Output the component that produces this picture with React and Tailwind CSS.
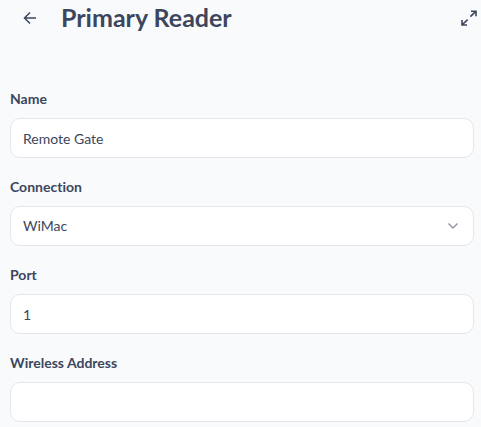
import { useState } from "react";

function Field({ id, label, children }) {
	return (
		<div className="flex flex-col gap-[7px]">
			<label
				htmlFor={id}
				className="text-sm leading-[25px] font-bold text-[#3c465c]"
			>
				{label}
			</label>
			{children}
		</div>
	);
}

function TextField({ id, label, defaultValue }) {
	const [value, setValue] = useState(defaultValue);

	return (
		<Field id={id} label={label}>
			<input
				id={id}
				type="text"
				value={value}
				onChange={(e) => setValue(e.target.value)}
				className="h-10 w-full rounded-[10px] border border-[#e3e6ea] bg-white px-3 text-sm text-[#3c465c] outline-none focus:border-indigo-400"
			/>
		</Field>
	);
}

function App() {
	const [connection, setConnection] = useState("WiMac");

	return (
		<main className="min-h-screen bg-[#f9fafc] pb-1 font-['Lato',sans-serif] text-[#3c465c] [font-variant-ligatures:none]">
			{/*header*/}
			<header className="flex h-9 items-center pr-1 pl-5">
				<button type="button" aria-label="Back" className="p-0.5">
					<svg
						className="size-4"
						viewBox="0 0 16 16"
						fill="none"
						stroke="currentColor"
						strokeWidth="1.5"
					>
						<path d="M14 8H2.5M8 2.5 2.5 8 8 13.5" />
					</svg>
				</button>
				<h1 className="ml-[21px] flex-1 text-[25px] font-bold">
					Primary Reader
				</h1>
				<button type="button" aria-label="Expand">
					<svg
						className="size-4"
						viewBox="0 0 16 16"
						fill="none"
						stroke="currentColor"
						strokeWidth="1.6"
					>
						<path d="M10 1.2h5v5M15 1.2 9.4 6.6M6 15H1v-5M1 15l5.6-5.4" />
					</svg>
				</button>
			</header>
			{/*form*/}
			<form className="mt-[50px] flex flex-col gap-4 pr-[7px] pl-[10px]">
				<TextField id="name" label="Name" defaultValue="Remote Gate" />
				<Field id="connection" label="Connection">
					<div className="relative">
						<select
							id="connection"
							value={connection}
							onChange={(e) => setConnection(e.target.value)}
							className="h-10 w-full appearance-none rounded-[10px] border border-[#e3e6ea] bg-white px-3 text-sm text-[#3c465c] outline-none focus:border-indigo-400"
						>
							<option>WiMac</option>
							<option>Wired</option>
						</select>
						<svg
							className="pointer-events-none absolute top-3 right-3 size-4 text-[#8f95a3]"
							viewBox="0 0 16 16"
							fill="none"
							stroke="currentColor"
							strokeWidth="1.4"
						>
							<path d="m2.5 5.5 4.5 4.5 4.5-4.5" />
						</svg>
					</div>
				</Field>
				<TextField id="port" label="Port" defaultValue="1" />
				<TextField
					id="address"
					label="Wireless Address"
					defaultValue=""
				/>
			</form>
		</main>
	);
}

export default App;
